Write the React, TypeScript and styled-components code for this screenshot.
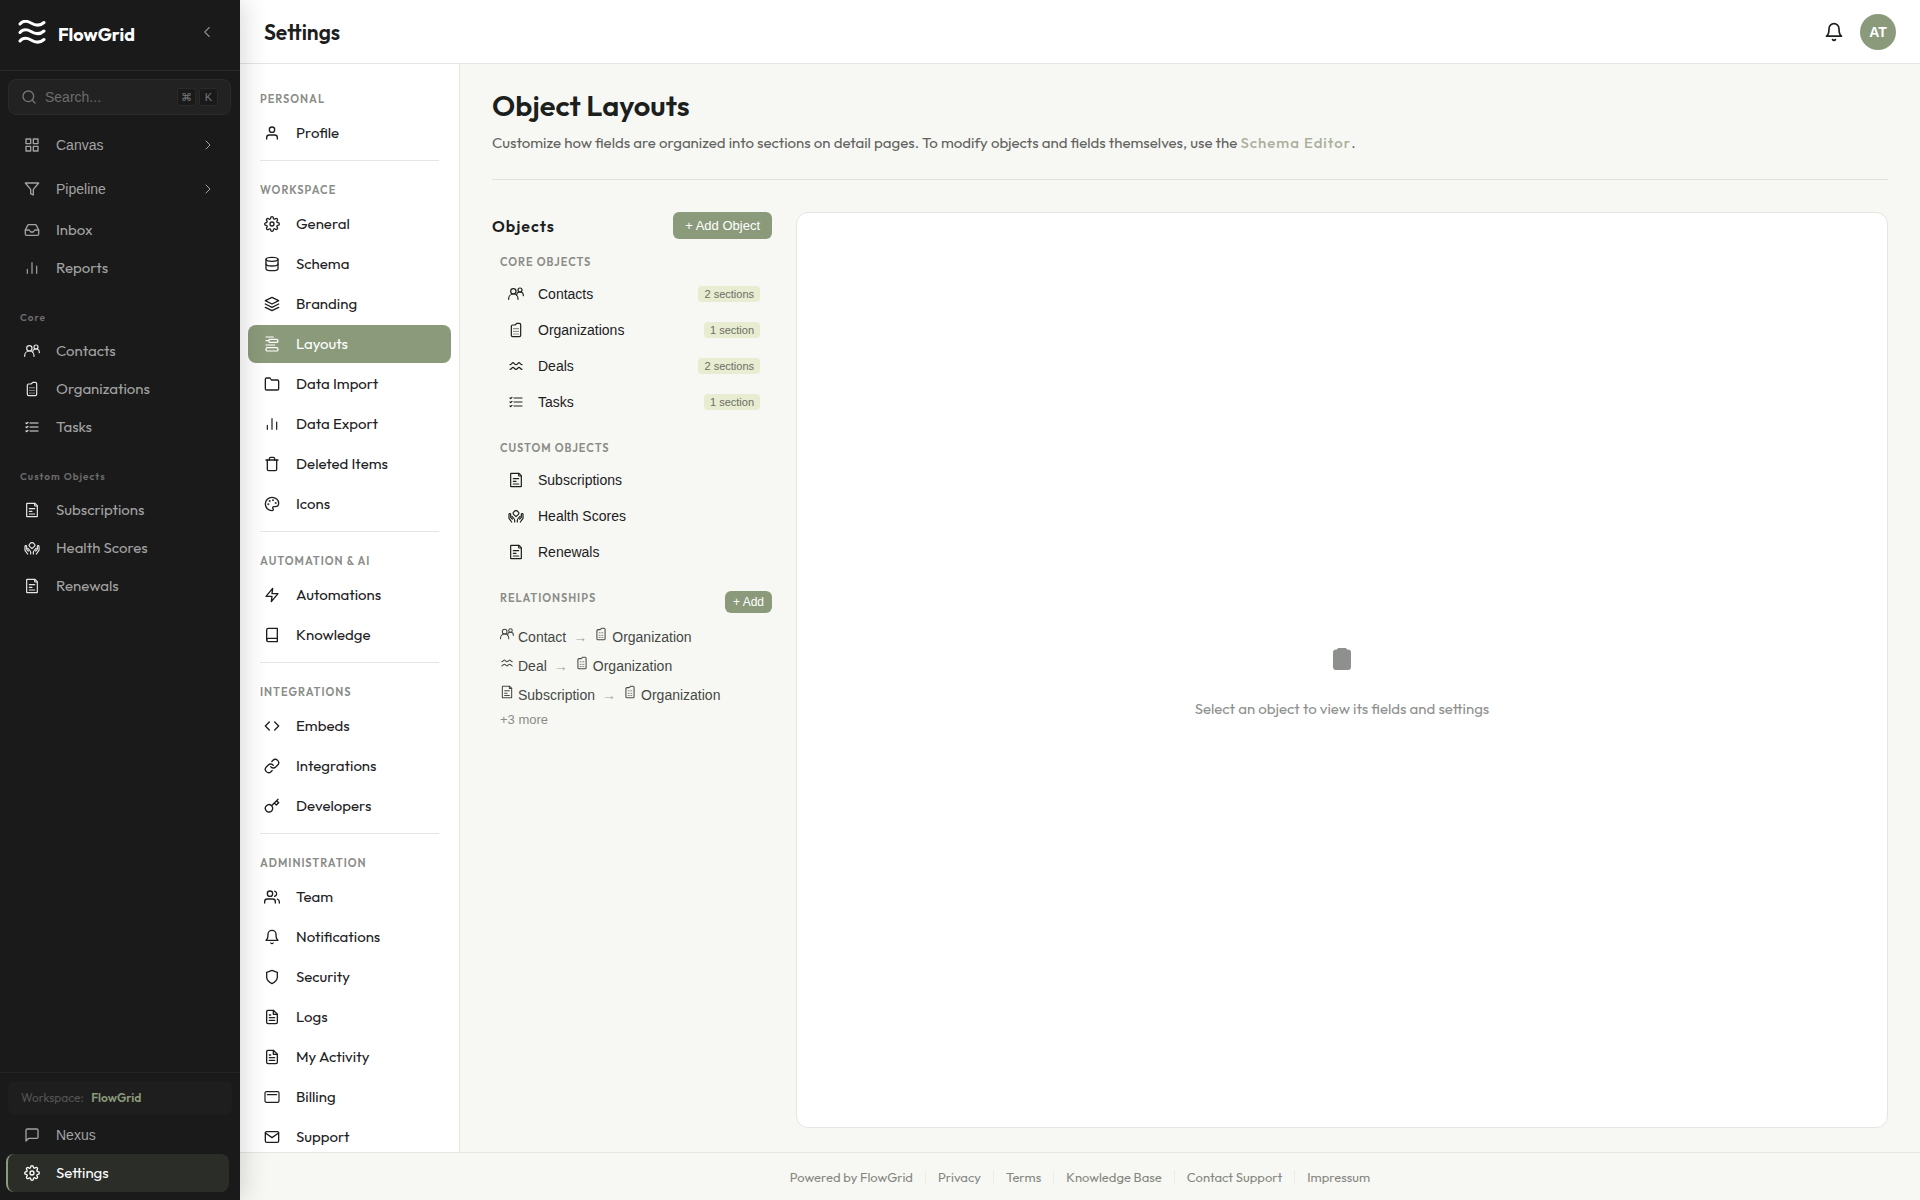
import React from 'react';
import styled, { createGlobalStyle, css } from 'styled-components';
import {
  FiBell, FiBook, FiChevronLeft, FiChevronRight, FiCode, FiFileText, FiFilter, FiFolder, FiGrid,
  FiInbox, FiKey, FiLayers, FiLink, FiMail, FiMessageSquare, FiSearch, FiSettings, FiShield, FiTrash, FiUser,
  FiUsers, FiZap, FiDatabase,
} from 'react-icons/fi';
import { Palette } from 'lucide-react';

const brandFont = "'Outfit', 'Lato', sans-serif";
const uiFont = "'Liberation Sans', Arial, sans-serif";

const GlobalStyle = createGlobalStyle`
  *, *::before, *::after { box-sizing: border-box; }
  body { margin: 0; font-family: ${brandFont}; color: #1c201d; background: #f7f8f4; }
  button, input { font: inherit; }
  a { color: inherit; text-decoration: none; }
  h1, h2, h3, p, ul { margin: 0; padding: 0; }
  ul { list-style: none; }
`;

/* ---------- icons ---------- */

type IconProps = { size?: number };
type IconType = React.ComponentType<any>;

const Glyph = ({ size = 16, children }: IconProps & { children: React.ReactNode }) => (
  <svg width={size} height={size} viewBox="0 0 24 24" fill="none" stroke="currentColor" strokeWidth={1.8}
    strokeLinecap="round" strokeLinejoin="round" aria-hidden="true">{children}</svg>
);

const GroupIcon = (p: IconProps) => (
  <Glyph {...p}>
    <path d="M1 20v-1a7 7 0 0 1 14 0v1" />
    <path d="M13 14a5 5 0 0 1 10 0v.5" />
    <circle cx="8" cy="8" r="4" />
    <circle cx="18" cy="6" r="3" />
  </Glyph>
);
const BuildingIcon = (p: IconProps) => (
  <Glyph {...p}>
    <path d="M7 22h10a2 2 0 0 0 2-2V4a2 2 0 0 0-2-2h-3.500L10.500 4.500H7a2 2 0 0 0-2 2V20a2 2 0 0 0 2 2z" />
    <path d="M9 10h.01M12 10h.01M15 10h.01M9 14h.01M12 14h.01M15 14h.01M9 18h.01M12 18h.01M15 18h.01" />
  </Glyph>
);
const TaskIcon = (p: IconProps) => (
  <Glyph {...p}>
    <path d="M9 6h12M9 12h12M9 18h12M3 6l1 1 2-2M3 12l1 1 2-2M3 18l1 1 2-2" />
  </Glyph>
);
const PageIcon = (p: IconProps) => (
  <Glyph {...p}>
    <path d="M4 21.4V2.6a.6.6 0 0 1 .6-.6h11.65a.6.6 0 0 1 .42.18l3.15 3.15a.6.6 0 0 1 .18.42V21.4a.6.6 0 0 1-.6.6H4.6a.6.6 0 0 1-.6-.6z" />
    <path d="M16 2v3.4a.6.6 0 0 0 .6.6H20M8 10h8M8 18h8M8 14h4" />
  </Glyph>
);
const HealthIcon = (p: IconProps) => (
  <Glyph {...p}>
    <path d="M12 13l-3.6-3.400a2.4 2.4 0 0 1 .8-4A2.9 2.9 0 0 1 12 4a2.9 2.9 0 0 1 2.8 1.600 2.4 2.4 0 0 1 .8 4z" />
    <path d="M10 21v-3c0-1.500-1-2.500-4-5.500M14 21v-3c0-1.500 1-2.500 4-5.500M6.500 16.500L4 14V9.500C4 8 1.500 8 1.500 9.500v6L5.500 21M17.500 16.500L20 14V9.500c0-1.500 2.500-1.500 2.500 0v6L18.500 21" />
  </Glyph>
);
const WavesIcon = (p: IconProps) => (
  <Glyph {...p}>
    <path d="M3 10c2 0 3-3 4.500-3S10 10 12 10s3-3 4.500-3S19 10 21 10M3 17c2 0 3-3 4.500-3S10 17 12 17s3-3 4.500-3 2.500 3 4.500 3" />
  </Glyph>
);
const BarsIcon = (p: IconProps) => (
  <Glyph {...p}><path d="M5 20v-6M12 20V4M19 20V9" /></Glyph>
);
const LayoutsIcon = (p: IconProps) => (
  <Glyph {...p}>
    <path d="M3 1.500h11M3 7h4M3 13.500h13" />
    <rect x="7" y="5" width="14" height="4.500" rx="2" />
    <rect x="3" y="17.500" width="18" height="5" rx="2" />
  </Glyph>
);
const CardIcon = (p: IconProps) => (
  <Glyph {...p}><rect x="1.500" y="4" width="21" height="16" rx="2" /><path d="M5 8.500h14" /></Glyph>
);
const Logo = () => (
  <svg width="28" height="24" viewBox="0 0 28 24" fill="none" stroke="currentColor" strokeWidth="3" strokeLinecap="round" aria-hidden="true">
    <path d="M2 4c3-3.500 6.500-3.500 11-1 5 3 9 3 13-.5M2 12.500c3-3.500 6.500-3.500 11-1 5 3 9 3 13-.5M2 21c3-3.500 6.500-3.500 11-1 5 3 9 3 13-.5" />
  </svg>
);
const ClipboardIcon = () => (
  <svg width="18" height="22" viewBox="0 0 18 22" fill="currentColor" aria-hidden="true">
    <path d="M5 0h8l1 1.500h1A3 3 0 0 1 18 4.500V19a3 3 0 0 1-3 3H3a3 3 0 0 1-3-3V4.500a3 3 0 0 1 3-3h1z" />
  </svg>
);

/* ---------- shell ---------- */

const Shell = styled.div`
  display: grid;
  grid-template-columns: 240px minmax(0, 1fr);
  grid-template-rows: minmax(0, 1fr);
  height: 100vh;
`;
const Sidebar = styled.aside`
  position: relative;
  z-index: 1;
  display: flex;
  flex-direction: column;
  background: #1a1a1a;
  color: #a3a3a3;
  box-shadow: 4px 0 24px rgba(0, 0, 0, 0.15);
`;
const SidebarHead = styled.div`
  display: flex;
  align-items: center;
  gap: 12px;
  height: 71px;
  padding: 0 24px 6px 18px;
  border-bottom: 1px solid #2a2a2a;
  color: #fff;
`;
const BrandName = styled.span`
  flex: 1;
  padding-top: 6px;
  font-size: 18px;
  font-weight: 700;
  line-height: 24px;
`;
const IconButton = styled.button`
  display: flex;
  padding: 0;
  border: 0;
  background: none;
  color: inherit;
  cursor: pointer;
`;
const CollapseButton = styled(IconButton)`color: #8a8a8a;`;
const SearchBox = styled.label`
  display: flex;
  align-items: center;
  gap: 8px;
  height: 36px;
  margin: 8px 9px 8px 8px;
  padding: 0 12px;
  border: 1px solid #2a2a2a;
  border-radius: 8px;
  background: #222;
  color: #777;
  font-family: ${uiFont};
`;
const SearchInput = styled.input`
  flex: 1;
  min-width: 0;
  padding: 0;
  border: 0;
  outline: 0;
  background: none;
  color: inherit;
  font-size: 14px;
  &::placeholder { color: #6c6c6c; opacity: 1; }
`;
const Keys = styled.span`display: flex; gap: 3px;`;
const Key = styled.kbd`
  display: flex;
  align-items: center;
  justify-content: center;
  width: 19px;
  height: 18px;
  border: 1px solid #2a2a2a;
  border-radius: 3px;
  background: #1a1a1a;
  color: #777;
  font-family: ${uiFont};
  font-size: 11px;
`;
const sideItem = css`
  display: flex;
  align-items: center;
  gap: 16px;
  width: 100%;
  padding: 0 24px;
  border: 0;
  background: none;
  color: inherit;
  text-align: left;
  cursor: pointer;
`;
const ExpandButton = styled.button`
  ${sideItem}
  height: 44px;
  font-family: ${uiFont};
  font-size: 14px;
`;
const Grow = styled.span`flex: 1;`;
const SideLink = styled.a<{ $bright?: boolean; $ui?: boolean }>`
  ${sideItem}
  height: 38px;
  font-family: ${p => (p.$ui ? uiFont : brandFont)};
  font-size: ${p => (p.$ui ? 14 : 15)}px;
  line-height: 18px;
  svg { color: ${p => (p.$bright ? '#e6e6e6' : 'inherit')}; }
`;
const ActiveLink = styled(SideLink)`
  width: auto;
  margin: 0 11px 0 6px;
  padding: 0 16px;
  border-left: 2px solid #8b9a7b;
  border-radius: 8px;
  background: #2a2d28;
  color: #fff;
`;
const SideLabel = styled.h3`
  padding: 23px 20px 6px;
  color: #6c6c6c;
  font-size: 10px;
  font-weight: 600;
  line-height: 16px;
  letter-spacing: 1px;
`;
const SidebarFoot = styled.div`
  margin-top: auto;
  padding: 8px 0;
  border-top: 1px solid #242424;
`;
const Workspace = styled.div`
  margin: 0 8px 1px;
  padding: 0 13px;
  border-radius: 8px;
  background: #1e1e1e;
  color: #555;
  font-size: 12px;
  line-height: 34px;
  b { margin-left: 5px; color: #8b9a7b; font-weight: 600; }
`;

const Page = styled.div`
  display: grid;
  grid-template-columns: 220px minmax(0, 1fr);
  grid-template-rows: 64px minmax(0, 1fr) 48px;
`;
const TopBar = styled.header`
  grid-column: 1 / -1;
  display: flex;
  align-items: center;
  justify-content: space-between;
  padding: 0 24px;
  border-bottom: 1px solid #e5e6e2;
  background: #fff;
`;
const TopTitle = styled.h2`font-size: 21px; font-weight: 600; line-height: 24px;`;
const TopActions = styled.div`display: flex; align-items: center; gap: 16px;`;
const Avatar = styled.button`
  width: 36px;
  height: 36px;
  padding: 0;
  border: 0;
  border-radius: 50%;
  background: #8b9a7b;
  color: #fff;
  font-family: ${uiFont};
  font-size: 14px;
  font-weight: 700;
`;

/* ---------- settings navigation ---------- */

const SettingsNav = styled.nav`
  overflow: hidden;
  padding-top: 6px;
  border-right: 1px solid #e5e6e2;
  background: #fff;
`;
const NavSection = styled.section`
  &:not(:last-child)::after {
    content: '';
    display: block;
    height: 1px;
    margin: 8px 20px 0;
    background: #e5e6e2;
  }
`;
const NavLabel = styled.h3`
  padding: 22px 20px 8px;
  color: #8a8c88;
  font-size: 11px;
  font-weight: 600;
  line-height: 14px;
  letter-spacing: 1px;
  text-transform: uppercase;
`;
const NavList = styled.ul`display: flex; flex-direction: column; gap: 2px; padding: 0 8px;`;
const NavLink = styled.a<{ $active?: boolean }>`
  display: flex;
  align-items: center;
  gap: 16px;
  height: 38px;
  padding: 0 16px;
  border-radius: 8px;
  background: ${p => (p.$active ? '#8b9a7b' : 'none')};
  color: ${p => (p.$active ? '#fff' : 'inherit')};
  font-size: 15px;
  line-height: 18px;
`;

/* ---------- content ---------- */

const Content = styled.main`
  display: flex;
  flex-direction: column;
  padding: 24px 32px;
`;
const PageHead = styled.div`
  padding-bottom: 24px;
  margin-bottom: 32px;
  border-bottom: 1px solid #e0e1dc;
`;
const PageTitle = styled.h1`font-size: 29px; font-weight: 600; line-height: 36px;`;
const PageText = styled.p`
  margin-top: 7px;
  color: #5f625e;
  font-size: 15px;
  line-height: 24px;
  a { color: #a9b09b; font-weight: 500; letter-spacing: 1px; }
`;
const Columns = styled.div`
  flex: 1;
  display: grid;
  grid-template-columns: 280px minmax(0, 1fr);
  gap: 24px;
`;
const PanelHead = styled.div`display: flex; align-items: center; justify-content: space-between;`;
const PanelTitle = styled.h2`font-size: 16px; font-weight: 600; line-height: 24px; letter-spacing: 1px;`;
const AddButton = styled.button<{ $small?: boolean }>`
  height: ${p => (p.$small ? 22 : 27)}px;
  padding: 0 ${p => (p.$small ? 8 : 12)}px;
  border: 0;
  border-radius: 6px;
  background: #8b9a7b;
  color: #fff;
  font-family: ${uiFont};
  font-size: ${p => (p.$small ? 12 : 13)}px;
  cursor: pointer;
`;
const ObjectSection = styled.section`padding: 16px 0 5px;`;
const ObjectLabel = styled.h3`
  padding: 0 8px;
  color: #8a8c88;
  font-size: 11px;
  font-weight: 600;
  line-height: 14px;
  letter-spacing: 1px;
  text-transform: uppercase;
`;
const ObjectList = styled.ul`padding-top: 7px;`;
const ObjectButton = styled.button`
  display: flex;
  align-items: center;
  gap: 14px;
  width: 100%;
  height: 36px;
  padding: 0 12px 0 16px;
  border: 0;
  background: none;
  color: inherit;
  font-family: ${uiFont};
  font-size: 14px;
  text-align: left;
  cursor: pointer;
`;
const Count = styled.span`
  padding: 0 6px;
  border-radius: 4px;
  background: #e8ecd0;
  color: #6b6e66;
  font-size: 11px;
  line-height: 16px;
`;
const RelationHead = styled.div`display: flex; align-items: flex-start; justify-content: space-between;`;
const Relations = styled.section`padding-top: 16px;`;
const RelationList = styled.ul`padding: 9px 8px 0; font-family: ${uiFont};`;
const Relation = styled.li`
  display: flex;
  align-items: center;
  gap: 4px;
  height: 29px;
  color: #454844;
  font-size: 14px;
  svg { margin-bottom: 5px; }
`;
const Arrow = styled.span`padding: 0 3px; color: #a3a5a0;`;
const More = styled.p`
  padding: 3px 8px;
  color: #8a8c88;
  font-family: ${uiFont};
  font-size: 13px;
  line-height: 16px;
`;
const EmptyCard = styled.section`
  display: flex;
  flex-direction: column;
  align-items: center;
  justify-content: center;
  gap: 27px;
  padding-top: 28px;
  border: 1px solid #e5e6e2;
  border-radius: 12px;
  background: #fff;
  color: #8e908e;
  font-size: 15px;
  line-height: 24px;
`;
const Footer = styled.footer`
  grid-column: 1 / -1;
  display: flex;
  align-items: center;
  justify-content: center;
  border-top: 1px solid #e5e6e2;
  color: #85877f;
  font-size: 13px;
  line-height: 14px;
`;
const FooterLink = styled.a`
  padding: 0 12px;
  & + & { border-left: 1px solid #ecede8; }
`;

/* ---------- data ---------- */

type Item = { label: string; icon: IconType; count?: string };

const core: Item[] = [
  { label: 'Contacts', icon: GroupIcon },
  { label: 'Organizations', icon: BuildingIcon },
  { label: 'Tasks', icon: TaskIcon },
];
const custom: Item[] = [
  { label: 'Subscriptions', icon: PageIcon },
  { label: 'Health Scores', icon: HealthIcon },
  { label: 'Renewals', icon: PageIcon },
];
const coreObjects: Item[] = [
  { label: 'Contacts', icon: GroupIcon, count: '2 sections' },
  { label: 'Organizations', icon: BuildingIcon, count: '1 section' },
  { label: 'Deals', icon: WavesIcon, count: '2 sections' },
  { label: 'Tasks', icon: TaskIcon, count: '1 section' },
];
const relations = [
  { from: 'Contact', icon: GroupIcon },
  { from: 'Deal', icon: WavesIcon },
  { from: 'Subscription', icon: PageIcon },
];
const settings: { title: string; items: Item[] }[] = [
  { title: 'Personal', items: [{ label: 'Profile', icon: FiUser }] },
  {
    title: 'Workspace',
    items: [
      { label: 'General', icon: FiSettings },
      { label: 'Schema', icon: FiDatabase },
      { label: 'Branding', icon: FiLayers },
      { label: 'Layouts', icon: LayoutsIcon },
      { label: 'Data Import', icon: FiFolder },
      { label: 'Data Export', icon: BarsIcon },
      { label: 'Deleted Items', icon: FiTrash },
      { label: 'Icons', icon: Palette },
    ],
  },
  { title: 'Automation & AI', items: [{ label: 'Automations', icon: FiZap }, { label: 'Knowledge', icon: FiBook }] },
  {
    title: 'Integrations',
    items: [
      { label: 'Embeds', icon: FiCode },
      { label: 'Integrations', icon: FiLink },
      { label: 'Developers', icon: FiKey },
    ],
  },
  {
    title: 'Administration',
    items: [
      { label: 'Team', icon: FiUsers },
      { label: 'Notifications', icon: FiBell },
      { label: 'Security', icon: FiShield },
      { label: 'Logs', icon: FiFileText },
      { label: 'My Activity', icon: FiFileText },
      { label: 'Billing', icon: CardIcon },
      { label: 'Support', icon: FiMail },
    ],
  },
];
const footerLinks = ['Powered by FlowGrid', 'Privacy', 'Terms', 'Knowledge Base', 'Contact Support', 'Impressum'];

const SideLinks = ({ items }: { items: Item[] }) => (
  <>
    {items.map(({ label, icon: Icon }) => (
      <SideLink href="#" key={label} $bright><Icon size={16} />{label}</SideLink>
    ))}
  </>
);

const Objects = ({ items }: { items: Item[] }) => (
  <ObjectList>
    {items.map(({ label, icon: Icon, count }) => (
      <li key={label}>
        <ObjectButton type="button">
          <Icon size={16} />
          <Grow>{label}</Grow>
          {count && <Count>{count}</Count>}
        </ObjectButton>
      </li>
    ))}
  </ObjectList>
);

export default function App() {
  return (
    <>
      <GlobalStyle />
      <Shell>
        <Sidebar>
          <SidebarHead>
            <Logo />
            <BrandName>FlowGrid</BrandName>
            <CollapseButton type="button" aria-label="Collapse sidebar"><FiChevronLeft size={18} strokeWidth={1.5} /></CollapseButton>
          </SidebarHead>
          <SearchBox>
            <FiSearch size={16} />
            <SearchInput type="text" placeholder="Search..." aria-label="Search" />
            <Keys><Key>⌘</Key><Key>K</Key></Keys>
          </SearchBox>
          <nav>
            {[{ label: 'Canvas', icon: FiGrid }, { label: 'Pipeline', icon: FiFilter }].map(({ label, icon: Icon }) => (
              <ExpandButton type="button" key={label}>
                <Icon size={16} />
                <Grow>{label}</Grow>
                <FiChevronRight size={16} strokeWidth={1.5} />
              </ExpandButton>
            ))}
            <SideLink href="#"><FiInbox size={16} />Inbox</SideLink>
            <SideLink href="#"><BarsIcon size={16} />Reports</SideLink>
            <SideLabel>Core</SideLabel>
            <SideLinks items={core} />
            <SideLabel>Custom Objects</SideLabel>
            <SideLinks items={custom} />
          </nav>
          <SidebarFoot>
            <Workspace>Workspace: <b>FlowGrid</b></Workspace>
            <SideLink href="#" $ui><FiMessageSquare size={16} />Nexus</SideLink>
            <ActiveLink href="#"><FiSettings size={16} />Settings</ActiveLink>
          </SidebarFoot>
        </Sidebar>

        <Page>
          <TopBar>
            <TopTitle>Settings</TopTitle>
            <TopActions>
              <IconButton type="button" aria-label="Notifications"><FiBell size={20} /></IconButton>
              <Avatar type="button">AT</Avatar>
            </TopActions>
          </TopBar>

          <SettingsNav>
            {settings.map(({ title, items }) => (
              <NavSection key={title}>
                <NavLabel>{title}</NavLabel>
                <NavList>
                  {items.map(({ label, icon: Icon }) => (
                    <li key={label}>
                      <NavLink href="#" $active={label === 'Layouts'}><Icon size={16} />{label}</NavLink>
                    </li>
                  ))}
                </NavList>
              </NavSection>
            ))}
          </SettingsNav>

          <Content>
            <PageHead>
              <PageTitle>Object Layouts</PageTitle>
              <PageText>
                Customize how fields are organized into sections on detail pages. To modify objects and fields
                themselves, use the <a href="#">Schema Editor</a>.
              </PageText>
            </PageHead>
            <Columns>
              <div>
                <PanelHead>
                  <PanelTitle>Objects</PanelTitle>
                  <AddButton type="button">+ Add Object</AddButton>
                </PanelHead>
                <ObjectSection>
                  <ObjectLabel>Core Objects</ObjectLabel>
                  <Objects items={coreObjects} />
                </ObjectSection>
                <ObjectSection>
                  <ObjectLabel>Custom Objects</ObjectLabel>
                  <Objects items={custom} />
                </ObjectSection>
                <Relations>
                  <RelationHead>
                    <ObjectLabel>Relationships</ObjectLabel>
                    <AddButton type="button" $small>+ Add</AddButton>
                  </RelationHead>
                  <RelationList>
                    {relations.map(({ from, icon: Icon }) => (
                      <Relation key={from}>
                        <Icon size={14} />{from}<Arrow>→</Arrow><BuildingIcon size={14} />Organization
                      </Relation>
                    ))}
                  </RelationList>
                  <More>+3 more</More>
                </Relations>
              </div>
              <EmptyCard>
                <ClipboardIcon />
                <p>Select an object to view its fields and settings</p>
              </EmptyCard>
            </Columns>
          </Content>

          <Footer>
            {footerLinks.map(label => <FooterLink href="#" key={label}>{label}</FooterLink>)}
          </Footer>
        </Page>
      </Shell>
    </>
  );
}
